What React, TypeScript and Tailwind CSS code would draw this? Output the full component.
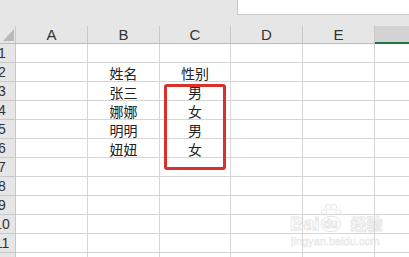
import React from "react";

const cols = [
  { k: "A", w: "w-[72px]" },
  { k: "B", w: "w-[72px]" },
  { k: "C", w: "w-[71px]" },
  { k: "D", w: "w-[72px]" },
  { k: "E", w: "w-[72px]" },
];

const data: Record<number, string[]> = {
  2: ["", "姓名", "性别"],
  3: ["", "张三", "男"],
  4: ["", "娜娜", "女"],
  5: ["", "明明", "男"],
  6: ["", "妞妞", "女"],
};

const cjk = { fontFamily: '"Noto Sans CJK SC", "Noto Sans", sans-serif' };
const lat = { fontFamily: '"Liberation Sans", Arial, sans-serif' };

export default function App() {
  const rows = Array.from({ length: 12 }, (_, i) => i + 1);
  return (
    <div className="relative w-[409px] h-[257px] overflow-hidden bg-[#e6e6e6]">
      {/* top formula area */}
      <div className="flex h-[26px]">
        <div className="w-[237px]" />
        <div className="flex-1 h-[15px] bg-white border-l border-b border-[#c8c8c8]" />
      </div>
      {/* column header */}
      <div className="flex h-[18px] border-b border-[#bdbdbd]" style={lat}>
        <div className="w-[16px] shrink-0 relative border-r border-[#c8c8c8] overflow-hidden">
          <svg className="absolute left-0 top-0" width="16" height="17" viewBox="0 0 16 17">
            <polygon points="3,15 14,3 14,15" fill="#b9b9b9" />
          </svg>
        </div>
        {cols.map((c) => (
          <div
            key={c.k}
            className={`${c.w} shrink-0 border-r border-[#c8c8c8] flex items-end justify-center text-[15px] leading-[17px] text-[#333]`}
          >
            {c.k}
          </div>
        ))}
        <div className="flex-1 bg-[#d3d3d3] border-b-2 border-[#217346] mb-[-1px]" />
      </div>
      {/* data rows */}
      {rows.map((r) => (
        <div key={r} className="flex h-[19px] bg-white">
          <div className="w-[16px] shrink-0 overflow-hidden bg-[#e6e6e6] border-r border-b border-[#c8c8c8]">
            <div
              className="w-[28px] ml-[-12px] text-center text-[14px] leading-[18px] text-[#333]"
              style={lat}
            >
              {r}
            </div>
          </div>
          {cols.map((c, ci) => (
            <div
              key={c.k}
              className={`${c.w} shrink-0 border-r border-b border-[#d6d6d6] flex items-end justify-center text-[14px] leading-[16px] text-[#222]`}
              style={cjk}
            >
              {data[r]?.[ci] ?? ""}
            </div>
          ))}
          <div className="flex-1 border-b border-[#d6d6d6]" />
        </div>
      ))}

      {/* red highlight box */}
      <div className="absolute left-[164px] top-[84px] w-[62px] h-[86px] border-[3px] border-[#d8302a] rounded-[3px]" />

      {/* watermark */}
      <div className="absolute left-[290px] top-[202px] w-[96px] h-[46px] pointer-events-none opacity-60">
        <svg className="absolute left-[30px] top-[1px]" width="22" height="15" viewBox="0 0 22 15">
          <g fill="none" stroke="#d8d8d8" strokeWidth="1">
            <circle cx="4" cy="9" r="2.6" />
            <circle cx="8.5" cy="4" r="2.8" />
            <circle cx="14" cy="4" r="2.8" />
            <circle cx="18.5" cy="9" r="2.6" />
          </g>
        </svg>
        <div className="absolute left-0 top-[13px] flex items-center text-[19px] leading-[17px] font-bold text-white [-webkit-text-stroke:1px_#d6d6d6]" style={lat}>
          <span>Bai</span>
          <span className="ml-[1px] w-[20px] h-[16px] rounded-full border border-[#d6d6d6] text-[12px] leading-[14px] text-center">du</span>
          <span className="ml-[10px] text-[16px]" style={cjk}>经验</span>
        </div>
        <div className="absolute left-[1px] top-[34px] text-[11px] leading-[11px] text-white [-webkit-text-stroke:0.6px_#d6d6d6]" style={lat}>
          jingyan.baidu.com
        </div>
      </div>
    </div>
  );
}
